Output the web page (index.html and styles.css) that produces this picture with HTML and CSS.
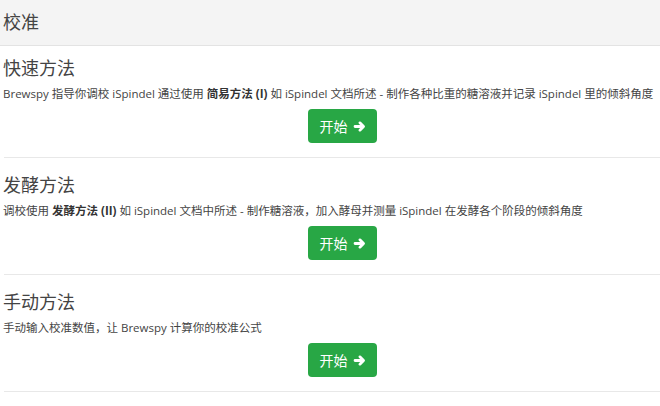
FILE: index.html
```html
<!DOCTYPE html>
<html lang="zh">
<head>
    <meta charset="UTF-8">
    <title>校准</title>
    <link rel="stylesheet" href="styles.css">
</head>
<body>
    <div class="page-header">校准</div>

    <div class="method">
        <h2 class="method-title">快速方法</h2>
        <p class="method-desc">Brewspy 指导你调校 iSpindel 通过使用 <b>简易方法 (I)</b> 如 iSpindel 文档所述 - 制作各种比重的糖溶液并记录 iSpindel 里的倾斜角度</p>
        <div class="method-action">
            <button class="start-button">开始
                <svg class="arrow" viewBox="0 0 16 16"><path d="M2.5 8H12.5M8.5 3.5L13 8L8.5 12.5"/></svg>
            </button>
        </div>
    </div>

    <div class="method">
        <h2 class="method-title">发酵方法</h2>
        <p class="method-desc">调校使用 <b>发酵方法 (II)</b> 如 iSpindel 文档中所述 - 制作糖溶液，加入酵母并测量 iSpindel 在发酵各个阶段的倾斜角度</p>
        <div class="method-action">
            <button class="start-button">开始
                <svg class="arrow" viewBox="0 0 16 16"><path d="M2.5 8H12.5M8.5 3.5L13 8L8.5 12.5"/></svg>
            </button>
        </div>
    </div>

    <div class="method">
        <h2 class="method-title">手动方法</h2>
        <p class="method-desc">手动输入校准数值，让 Brewspy 计算你的校准公式</p>
        <div class="method-action">
            <button class="start-button">开始
                <svg class="arrow" viewBox="0 0 16 16"><path d="M2.5 8H12.5M8.5 3.5L13 8L8.5 12.5"/></svg>
            </button>
        </div>
    </div>
</body>
</html>
```

FILE: styles.css
```css
* {
    margin: 0;
    padding: 0;
    box-sizing: border-box;
}

body {
    width: 660px;
    overflow: hidden;
    background: #fff;
    color: #333;
    font-family: "Open Sans", "Noto Sans CJK SC", sans-serif;
}

.page-header {
    height: 46px;
    padding: 9px 3px 0;
    background: #f4f4f4;
    border-bottom: 1px solid #e3e3e3;
    font-size: 18px;
    line-height: 26px;
    color: #444;
}

.method {
    width: 676px;
    margin-left: 4px;
    padding: 14px 0;
    border-bottom: 1px solid #e8e8e8;
}

.page-header + .method {
    padding-top: 9px;
}

.method-title {
    margin-left: -1px;
    font-size: 18px;
    font-weight: normal;
    line-height: 26px;
    color: #444;
}

.method-desc {
    margin-left: -1px;
    margin-top: 2px;
    font-size: 11.5px;
    line-height: 22px;
    white-space: nowrap;
    color: #444;
}

.method-desc b {
    color: #333;
}

.method-action {
    display: flex;
    justify-content: center;
    padding-top: 4px;
}

.start-button {
    display: flex;
    align-items: center;
    gap: 5px;
    height: 34px;
    padding: 0 11px 0 12px;
    background: #28a745;
    border: none;
    border-radius: 4px;
    color: #fff;
    font-family: "Open Sans", "Noto Sans CJK SC", sans-serif;
    font-size: 14px;
}

.arrow {
    width: 13px;
    height: 13px;
    fill: none;
    stroke: #fff;
    stroke-width: 3.4;
    stroke-linecap: round;
    stroke-linejoin: round;
}
```
